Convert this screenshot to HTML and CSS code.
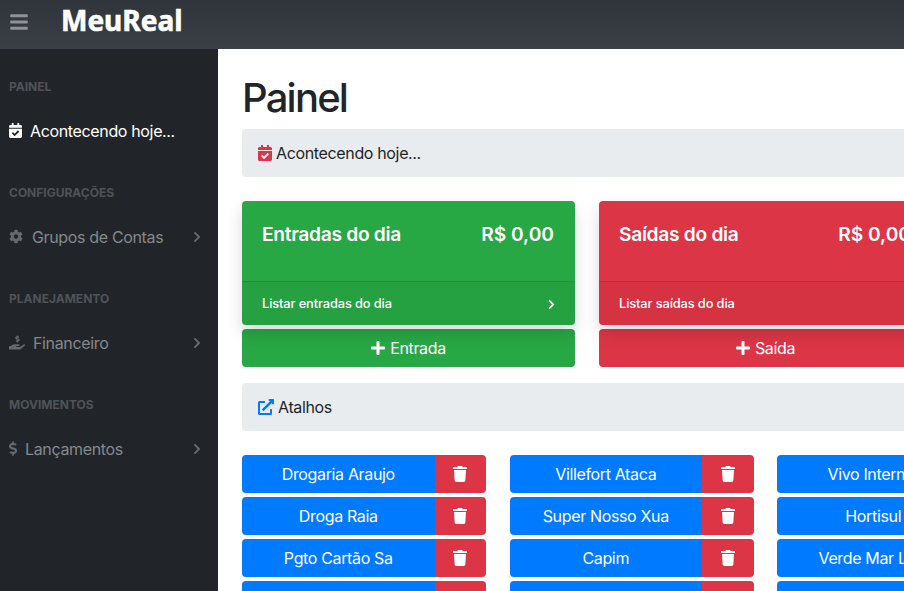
FILE: index.html
```html
<!DOCTYPE html>
<html lang="pt-BR">
<head>
    <meta charset="UTF-8">
    <meta name="viewport" content="width=device-width, initial-scale=1.0">
    <title>MeuReal</title>
    <link rel="stylesheet" href="styles.css">
</head>
<body>
    <svg class="icon-defs" aria-hidden="true">
        <symbol id="i-bars" viewBox="0 0 448 512"><path d="M16 132h416c8.837 0 16-7.163 16-16V76c0-8.837-7.163-16-16-16H16C7.163 60 0 67.163 0 76v40c0 8.837 7.163 16 16 16zm0 160h416c8.837 0 16-7.163 16-16v-40c0-8.837-7.163-16-16-16H16c-8.837 0-16 7.163-16 16v40c0 8.837 7.163 16 16 16zm0 160h416c8.837 0 16-7.163 16-16v-40c0-8.837-7.163-16-16-16H16c-8.837 0-16 7.163-16 16v40c0 8.837 7.163 16 16 16z"/></symbol>
        <symbol id="i-calendar" viewBox="0 0 448 512"><path d="M436 160H12c-6.627 0-12-5.373-12-12v-36c0-26.51 21.49-48 48-48h48V12c0-6.627 5.373-12 12-12h40c6.627 0 12 5.373 12 12v52h128V12c0-6.627 5.373-12 12-12h40c6.627 0 12 5.373 12 12v52h48c26.51 0 48 21.49 48 48v36c0 6.627-5.373 12-12 12zM12 192h424c6.627 0 12 5.373 12 12v260c0 26.51-21.49 48-48 48H48c-26.51 0-48-21.49-48-48V204c0-6.627 5.373-12 12-12zm333.296 95.947l-28.169-28.398c-4.667-4.705-12.265-4.736-16.970-.068L194.12 364.665l-45.98-46.352c-4.667-4.705-12.266-4.736-16.971-.068l-28.397 28.17c-4.705 4.667-4.736 12.265-.068 16.970l82.601 83.269c4.667 4.705 12.265 4.736 16.970.068l142.953-141.805c4.705-4.667 4.736-12.265.068-16.970z"/></symbol>
        <symbol id="i-cog" viewBox="0 0 512 512"><path d="M487.4 315.7l-42.6-24.6c4.3-23.2 4.3-47 0-70.2l42.6-24.6c4.9-2.8 7.1-8.6 5.5-14-11.1-35.6-30-67.8-54.7-94.6-3.8-4.1-10-5.1-14.8-2.3L380.8 110c-17.9-15.4-38.5-27.3-60.8-35.1V25.8c0-5.6-3.9-10.5-9.4-11.7-36.7-8.2-74.3-7.8-109.2 0-5.5 1.2-9.4 6.1-9.4 11.7V75c-22.2 7.9-42.8 19.8-60.8 35.1L88.7 85.5c-4.9-2.8-11-1.9-14.8 2.3-24.7 26.7-43.6 58.9-54.7 94.6-1.7 5.4.6 11.2 5.5 14L67.3 221c-4.3 23.2-4.3 47 0 70.2l-42.6 24.6c-4.9 2.8-7.1 8.6-5.5 14 11.1 35.6 30 67.8 54.7 94.6 3.8 4.1 10 5.1 14.8 2.3l42.6-24.6c17.9 15.4 38.5 27.3 60.8 35.1v49.2c0 5.6 3.9 10.5 9.4 11.7 36.7 8.2 74.3 7.8 109.2 0 5.5-1.2 9.4-6.1 9.4-11.7v-49.2c22.2-7.9 42.8-19.8 60.8-35.1l42.6 24.6c4.9 2.8 11 1.9 14.8-2.3 24.7-26.7 43.6-58.9 54.7-94.6 1.5-5.5-.7-11.3-5.6-14.1zM256 336c-44.1 0-80-35.9-80-80s35.9-80 80-80 80 35.9 80 80-35.9 80-80 80z"/></symbol>
        <symbol id="i-hand" viewBox="0 0 576 512"><path d="M271.06,144.3l54.27,14.3a8.59,8.59,0,0,1,6.63,8.1c0,4.6-4.09,8.4-9.12,8.4h-35.6a30,30,0,0,1-11.19-2.2c-5.24-2.2-11.28-1.7-15.3,2l-19,17.5a11.68,11.68,0,0,0-2.25,2.66,11.42,11.42,0,0,0,3.88,15.74,83.77,83.77,0,0,0,34.51,11.5V240c0,8.8,7.83,16,17.37,16h17.37c9.55,0,17.38-7.2,17.38-16V222.4c32.93-3.6,57.84-31,53.5-63-3.15-23-22.46-41.3-46.56-47.7L282.68,97.4a8.59,8.59,0,0,1-6.63-8.1c0-4.6,4.09-8.4,9.12-8.4h35.6A30,30,0,0,1,332,83.1c5.23,2.2,11.28,1.7,15.3-2l19-17.5A11.31,11.31,0,0,0,368.47,61a11.43,11.43,0,0,0-3.84-15.78,83.82,83.82,0,0,0-34.52-11.5V16c0-8.8-7.82-16-17.37-16H295.37C285.82,0,278,7.2,278,16V33.6c-32.89,3.6-57.85,31-53.51,63C227.63,119.6,247,137.9,271.06,144.3ZM565.27,328.1c-11.8-10.7-30.2-10-42.6,0L430.27,402a63.64,63.64,0,0,1-40,14H272a16,16,0,0,1,0-32h78.29c15.9,0,30.71-10.9,33.25-26.6a31.2,31.2,0,0,0,.46-5.46A32,32,0,0,0,352,320H192a117.66,117.66,0,0,0-74.1,26.29L71.4,384H16A16,16,0,0,0,0,400v96a16,16,0,0,0,16,16H372.77a64,64,0,0,0,40-14L564,377a32,32,0,0,0,1.28-48.9Z"/></symbol>
        <symbol id="i-dollar" viewBox="0 0 320 512"><path d="M209.2 233.4l-108-31.6C88.7 198.2 80 186.5 80 173.5c0-16.3 13.2-29.5 29.5-29.5h66.3c12.2 0 24.2 3.7 34.2 10.5 6.1 4.1 14.3 3.1 19.5-2l34.8-34c7.1-6.9 6.1-18.4-1.8-24.5C238 74.8 207.4 64.1 176 64V16c0-8.8-7.2-16-16-16h-32c-8.8 0-16 7.2-16 16v48h-2.5C45.8 64-5.4 118.7.5 183.6c4.2 46.1 39.4 83.6 83.8 96.6l102.5 30c12.5 3.7 21.2 15.3 21.2 28.3 0 16.3-13.2 29.5-29.5 29.5h-66.3C100 368 88 364.3 78 357.5c-6.1-4.1-14.3-3.1-19.5 2l-34.8 34c-7.1 6.9-6.1 18.4 1.8 24.5 24.5 19.2 55.1 29.9 86.5 30v48c0 8.8 7.2 16 16 16h32c8.8 0 16-7.2 16-16v-48.2c46.6-.9 90.3-28.6 105.7-72.7 21.5-61.6-14.6-124.8-72.5-141.7z"/></symbol>
        <symbol id="i-chevron" viewBox="0 0 320 512"><path d="M285.476 272.971L91.132 467.314c-9.373 9.373-24.569 9.373-33.941 0l-22.667-22.667c-9.357-9.357-9.375-24.522-.04-33.901L188.505 256 34.484 101.255c-9.335-9.379-9.317-24.544.04-33.901l22.667-22.667c9.373-9.373 24.569-9.373 33.941 0L285.475 239.03c9.373 9.372 9.373 24.568.001 33.941z"/></symbol>
        <symbol id="i-plus" viewBox="0 0 448 512"><path d="M416 208H272V64c0-17.67-14.33-32-32-32h-32c-17.67 0-32 14.33-32 32v144H32c-17.67 0-32 14.33-32 32v32c0 17.67 14.33 32 32 32h144v144c0 17.67 14.33 32 32 32h32c17.67 0 32-14.33 32-32V304h144c17.67 0 32-14.33 32-32v-32c0-17.67-14.33-32-32-32z"/></symbol>
        <symbol id="i-link" viewBox="0 0 512 512"><path d="M432,320H400a16,16,0,0,0-16,16V448H64V128H208a16,16,0,0,0,16-16V80a16,16,0,0,0-16-16H48A48,48,0,0,0,0,112V464a48,48,0,0,0,48,48H400a48,48,0,0,0,48-48V336A16,16,0,0,0,432,320ZM488,0h-128c-21.37,0-32.05,25.91-17,41l35.73,35.73L135,320.37a24,24,0,0,0,0,34L157.67,377a24,24,0,0,0,34,0L435.28,133.32,471,169c15,15,41,4.5,41-17V24A24,24,0,0,0,488,0Z"/></symbol>
        <symbol id="i-trash" viewBox="0 0 448 512"><path d="M432 32H312l-9.4-18.7A24 24 0 0 0 281.1 0H166.8a23.72 23.72 0 0 0-21.4 13.3L136 32H16A16 16 0 0 0 0 48v32a16 16 0 0 0 16 16h416a16 16 0 0 0 16-16V48a16 16 0 0 0-16-16zM53.2 467a48 48 0 0 0 47.9 45h245.8a48 48 0 0 0 47.9-45L416 128H32z"/></symbol>
    </svg>

    <header class="topnav">
        <svg class="icon toggle-icon"><use href="#i-bars"/></svg>
        <a class="brand">MeuReal</a>
    </header>

    <div class="layout">
        <nav class="sidebar">
            <div class="side-heading">Painel</div>
            <a class="side-link active">
                <svg class="icon side-icon"><use href="#i-calendar"/></svg>
                <span>Acontecendo hoje...</span>
            </a>

            <div class="side-heading">Configurações</div>
            <a class="side-link">
                <svg class="icon side-icon cog"><use href="#i-cog"/></svg>
                <span>Grupos de Contas</span>
                <svg class="icon side-arrow"><use href="#i-chevron"/></svg>
            </a>

            <div class="side-heading">Planejamento</div>
            <a class="side-link">
                <svg class="icon side-icon hand"><use href="#i-hand"/></svg>
                <span>Financeiro</span>
                <svg class="icon side-arrow"><use href="#i-chevron"/></svg>
            </a>

            <div class="side-heading">Movimentos</div>
            <a class="side-link">
                <svg class="icon side-icon dollar"><use href="#i-dollar"/></svg>
                <span>Lançamentos</span>
                <svg class="icon side-arrow"><use href="#i-chevron"/></svg>
            </a>
        </nav>

        <main class="content">
            <h1>Painel</h1>

            <div class="breadcrumb">
                <svg class="icon crumb-icon text-red"><use href="#i-calendar"/></svg>
                <span>Acontecendo hoje...</span>
            </div>

            <div class="summary-row">
                <div class="summary-col">
                    <div class="card green">
                        <div class="card-body">
                            <span>Entradas do dia</span>
                            <span class="card-amount">R$ 0,00</span>
                        </div>
                        <div class="card-footer">
                            <span>Listar entradas do dia</span>
                            <svg class="icon footer-arrow"><use href="#i-chevron"/></svg>
                        </div>
                    </div>
                    <a class="btn green">
                        <svg class="icon plus-icon"><use href="#i-plus"/></svg>
                        <span>Entrada</span>
                    </a>
                </div>
                <div class="summary-col">
                    <div class="card red">
                        <div class="card-body">
                            <span>Saídas do dia</span>
                            <span class="card-amount">R$ 0,00</span>
                        </div>
                        <div class="card-footer">
                            <span>Listar saídas do dia</span>
                            <svg class="icon footer-arrow"><use href="#i-chevron"/></svg>
                        </div>
                    </div>
                    <a class="btn red">
                        <svg class="icon plus-icon"><use href="#i-plus"/></svg>
                        <span>Saída</span>
                    </a>
                </div>
            </div>

            <div class="breadcrumb">
                <svg class="icon crumb-icon text-blue"><use href="#i-link"/></svg>
                <span>Atalhos</span>
            </div>

            <div class="shortcuts">
                <div class="shortcut-col">
                    <div class="shortcut"><a class="shortcut-name">Drogaria Araujo</a><a class="shortcut-del"><svg class="icon"><use href="#i-trash"/></svg></a></div>
                    <div class="shortcut"><a class="shortcut-name">Droga Raia</a><a class="shortcut-del"><svg class="icon"><use href="#i-trash"/></svg></a></div>
                    <div class="shortcut"><a class="shortcut-name">Pgto Cartão Sa</a><a class="shortcut-del"><svg class="icon"><use href="#i-trash"/></svg></a></div>
                    <div class="shortcut"><a class="shortcut-name">&nbsp;</a><a class="shortcut-del"><svg class="icon"><use href="#i-trash"/></svg></a></div>
                </div>
                <div class="shortcut-col">
                    <div class="shortcut"><a class="shortcut-name">Villefort Ataca</a><a class="shortcut-del"><svg class="icon"><use href="#i-trash"/></svg></a></div>
                    <div class="shortcut"><a class="shortcut-name">Super Nosso Xua</a><a class="shortcut-del"><svg class="icon"><use href="#i-trash"/></svg></a></div>
                    <div class="shortcut"><a class="shortcut-name">Capim</a><a class="shortcut-del"><svg class="icon"><use href="#i-trash"/></svg></a></div>
                    <div class="shortcut"><a class="shortcut-name">&nbsp;</a><a class="shortcut-del"><svg class="icon"><use href="#i-trash"/></svg></a></div>
                </div>
                <div class="shortcut-col">
                    <div class="shortcut"><a class="shortcut-name">Vivo Internet</a><a class="shortcut-del"><svg class="icon"><use href="#i-trash"/></svg></a></div>
                    <div class="shortcut"><a class="shortcut-name">Hortisul</a><a class="shortcut-del"><svg class="icon"><use href="#i-trash"/></svg></a></div>
                    <div class="shortcut"><a class="shortcut-name">Verde Mar Loja</a><a class="shortcut-del"><svg class="icon"><use href="#i-trash"/></svg></a></div>
                    <div class="shortcut"><a class="shortcut-name">&nbsp;</a><a class="shortcut-del"><svg class="icon"><use href="#i-trash"/></svg></a></div>
                </div>
            </div>
        </main>
    </div>
</body>
</html>
```

FILE: styles.css
```css
html, body {
    height: 100%;
    overflow: hidden;
}

body {
    margin: 0;
    font-family: Inter, "Noto Sans", sans-serif;
    font-size: 16px;
    line-height: 24px;
    letter-spacing: -0.35px;
    color: #212529;
    background-color: #fff;
}

.icon-defs {
    display: none;
}

.icon {
    fill: currentColor;
    flex: none;
}

.topnav {
    display: flex;
    align-items: center;
    height: 49px;
    background: linear-gradient(180deg, #30353b, #3a3f47);
}

.toggle-icon {
    width: 18px;
    height: 20px;
    margin: -6px 0 0 10px;
    color: #8f9296;
}

.brand {
    margin: -10px 0 0 33px;
    font-family: "Noto Sans", sans-serif;
    font-size: 28px;
    font-weight: 700;
    letter-spacing: 0;
    color: #fff;
    -webkit-text-stroke: 0.6px #fff;
}

.layout {
    display: flex;
    height: 542px;
}

.sidebar {
    flex: none;
    width: 218px;
    background-color: #212529;
}

.side-heading {
    padding: 29px 9px 12px;
    font-size: 12px;
    line-height: 18px;
    font-weight: 700;
    letter-spacing: 0;
    text-transform: uppercase;
    color: #4f5358;
}

.side-link {
    display: flex;
    align-items: center;
    box-sizing: border-box;
    height: 47px;
    padding: 0 17px 2px 9px;
    color: #85888c;
}

.side-link.active {
    color: #fff;
}

.side-icon {
    width: 13px;
    height: 15px;
    margin-right: 8px;
    color: #65686c;
}

.side-link.active .side-icon {
    color: #fff;
}

.side-icon.cog {
    width: 14px;
    margin-right: 9px;
}

.side-icon.hand {
    width: 16px;
}

.side-icon.dollar {
    width: 9px;
    margin-right: 7px;
}

.side-arrow {
    width: 8px;
    height: 12px;
    margin-left: auto;
    color: #65686c;
}

.content {
    flex: none;
    width: 1046px;
    padding-left: 24px;
}

h1 {
    margin: 25px 0 7px;
    font-size: 40px;
    line-height: 48px;
    font-weight: 500;
    letter-spacing: -1.8px;
}

.breadcrumb {
    display: flex;
    align-items: center;
    height: 48px;
    padding: 0 16px;
    border-radius: 4px;
    background-color: #e9ecef;
}

.crumb-icon {
    width: 14px;
    height: 16px;
    margin-right: 4px;
}

.crumb-icon.text-blue {
    width: 16px;
}

.text-red {
    color: #dc3545;
}

.text-blue {
    color: #007bff;
}

.summary-row {
    display: flex;
    gap: 24px;
    margin: 24px 0 16px;
}

.summary-col {
    width: 333px;
}

.card {
    position: relative;
    z-index: 1;
    border-radius: 4px;
    color: #fff;
    box-shadow: 0 8px 16px rgba(0, 0, 0, 0.15);
}

.green {
    background-color: #28a745;
}

.red {
    background-color: #dc3545;
}

.card-body {
    display: flex;
    justify-content: space-between;
    height: 80px;
    padding-top: 21px;
    padding-left: 20px;
    padding-right: 21px;
    box-sizing: border-box;
    font-size: 19.2px;
    font-weight: 600;
    letter-spacing: -0.3px;
}

.card-amount {
    letter-spacing: 0;
}

.card-footer {
    display: flex;
    justify-content: space-between;
    align-items: center;
    height: 44px;
    padding: 1px 20px 0;
    box-sizing: border-box;
    border-top: 1px solid rgba(0, 0, 0, 0.125);
    border-radius: 0 0 4px 4px;
    background-color: rgba(0, 0, 0, 0.03);
    font-size: 12.8px;
    font-weight: 500;
    letter-spacing: -0.1px;
}

.footer-arrow {
    width: 7px;
    height: 11px;
}

.btn {
    display: flex;
    justify-content: center;
    align-items: center;
    gap: 5px;
    height: 38px;
    margin-top: 4px;
    border-radius: 4px;
    color: #fff;
}

.plus-icon {
    width: 14px;
    height: 16px;
}

.shortcuts {
    display: flex;
    gap: 23.5px;
    margin-top: 24px;
}

.shortcut-col {
    width: 244px;
}

.shortcut {
    display: flex;
    height: 38px;
    margin-bottom: 4px;
    border-radius: 4px;
    overflow: hidden;
    color: #fff;
}

.shortcut-name {
    flex: 1;
    line-height: 38px;
    text-align: center;
    background-color: #007bff;
}

.shortcut-del {
    display: flex;
    justify-content: center;
    align-items: center;
    width: 51.5px;
    background-color: #dc3545;
}

.shortcut-del .icon {
    width: 14px;
    height: 16px;
}
```
